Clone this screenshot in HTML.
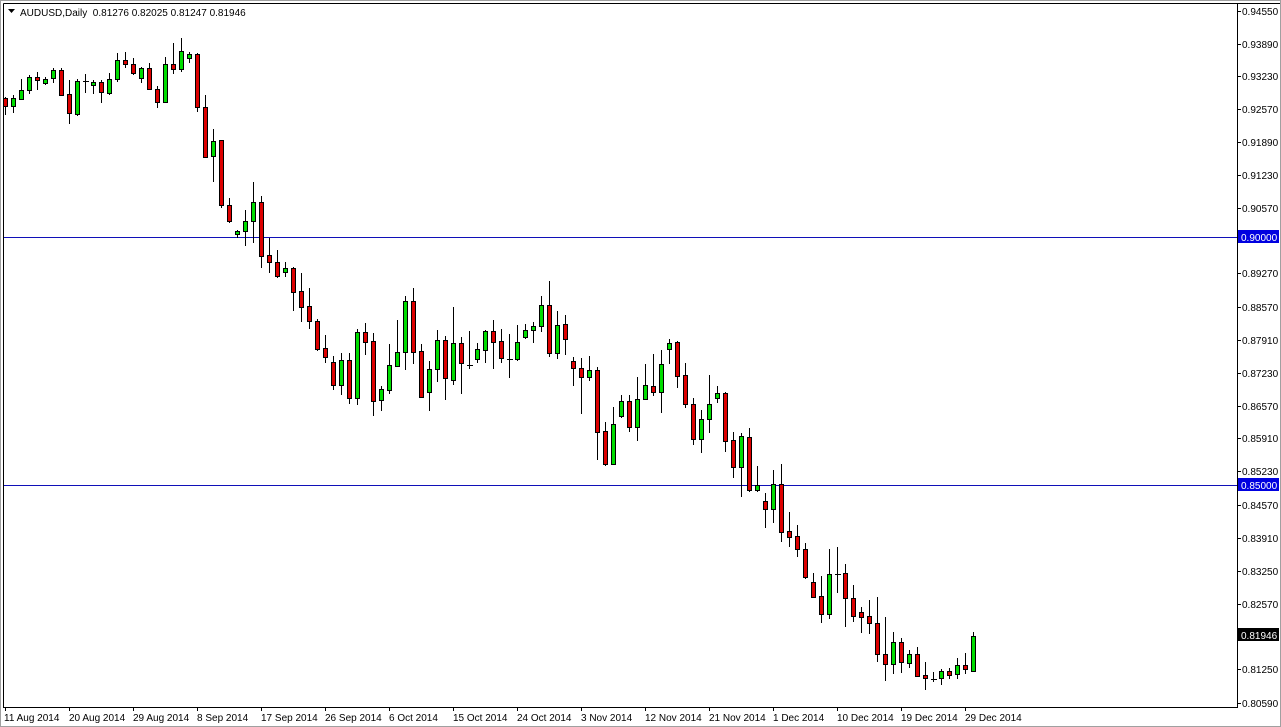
<!DOCTYPE html>
<html><head><meta charset="utf-8"><style>
html,body{margin:0;padding:0;background:#fff;width:1281px;height:727px;overflow:hidden}
svg{display:block}
text{font-family:"Liberation Sans",sans-serif;font-size:10px;fill:#000}
.g{fill:#00dd00;stroke:#000;stroke-width:1}
.r{fill:#dd0000;stroke:#000;stroke-width:1}
</style></head><body>
<svg width="1281" height="727" viewBox="0 0 1281 727" xmlns="http://www.w3.org/2000/svg">
<rect x="0" y="0" width="1281" height="727" fill="#fff"/>
<rect x="0.5" y="0.5" width="1280" height="726" fill="none" stroke="#a0a0a0"/>
<path d="M3.5 3.5H1280M3.5 3.5V707.5H1237.5V3.5" fill="none" stroke="#000"/>
<path d="M4 237.5H1237M4 485.5H1237" stroke="#1010b8" stroke-width="1"/>
<text x="20" y="16">AUDUSD,Daily&#160; 0.81276 0.82025 0.81247 0.81946</text>
<path d="M8 9h7l-3.5 4z" fill="#000"/>
<g id="wicks" stroke="#000" stroke-width="1" fill="none">
<path d="M5.5 97V115M13.5 95V113M21.5 79V100M29.5 75V94M37.5 72V90M45.5 77V85M53.5 68V83M61.5 68V96M69.5 80V124M77.5 79V116M85.5 74V93M93.5 80V94M101.5 80V103M109.5 73V95M117.5 53V82M125.5 52V68M133.5 58V75M141.5 67V83M149.5 63V90M157.5 86V108M165.5 57V103M173.5 43V74M181.5 38V72M189.5 52V63M197.5 53V112M205.5 95V157M213.5 129V182M221.5 140V208M229.5 198V223M237.5 230V238M245.5 210V246M253.5 182V243M261.5 196V268M269.5 238V273M277.5 250V278M285.5 262V277M293.5 267V311M301.5 273V322M309.5 288V329M317.5 319V351M325.5 335V363M333.5 356V390M341.5 353V395M349.5 353V404M357.5 329V405M365.5 323V355M373.5 333V416M381.5 386V411M389.5 344V394M397.5 320V366M405.5 296V370M413.5 288V364M421.5 344V397M429.5 361V411M437.5 330V382M445.5 336V400M453.5 307V385M461.5 337V394M469.5 331V369M477.5 343V363M485.5 330V363M493.5 320V369M501.5 329V363M509.5 334V378M517.5 325V361M525.5 324V339M533.5 322V343M541.5 296V332M549.5 281V357M557.5 311V359M565.5 315V355M573.5 357V386M581.5 358V414M589.5 356V381M597.5 367V460M605.5 422V466M613.5 407V465M621.5 395V418M629.5 395V432M637.5 377V441M645.5 364V400M653.5 354V396M661.5 350V413M669.5 339V364M677.5 341V388M685.5 363V408M693.5 398V445M701.5 410V453M709.5 375V433M717.5 386V403M725.5 392V452M733.5 432V478M741.5 433V497M749.5 428V492M757.5 466V492M765.5 493V528M773.5 470V523M781.5 464V542M789.5 512V547M797.5 525V557M805.5 543V579M813.5 573V597M821.5 576V623M829.5 549V619M837.5 547V593M845.5 564V627M853.5 585V622M861.5 607V633M869.5 600V634M877.5 597V662M885.5 617V681M893.5 632V674M901.5 638V673M909.5 650V668M917.5 647V677M925.5 662V690M933.5 672V682M941.5 669V685M949.5 668V679M957.5 658V679M965.5 653V674M973.5 632V672"/>
<path d="M83 81.5H89M467 365.5H473M507 359.5H513M835 574.5H841M931 679.5H937"/>
</g>
<g id="bodies">
<rect class="r" x="3.5" y="98.5" width="4" height="8"/>
<rect class="g" x="11.5" y="98.5" width="4" height="8"/>
<rect class="g" x="19.5" y="90.5" width="4" height="9"/>
<rect class="g" x="27.5" y="77.5" width="4" height="13"/>
<rect class="r" x="35.5" y="77.5" width="4" height="3"/>
<rect class="g" x="43.5" y="79.5" width="4" height="4"/>
<rect class="g" x="51.5" y="70.5" width="4" height="8"/>
<rect class="r" x="59.5" y="70.5" width="4" height="25"/>
<rect class="r" x="67.5" y="94.5" width="4" height="19"/>
<rect class="g" x="75.5" y="81.5" width="4" height="33"/>
<rect class="g" x="91.5" y="82.5" width="4" height="3"/>
<rect class="r" x="99.5" y="82.5" width="4" height="10"/>
<rect class="g" x="107.5" y="79.5" width="4" height="14"/>
<rect class="g" x="115.5" y="60.5" width="4" height="19"/>
<rect class="r" x="123.5" y="60.5" width="4" height="4"/>
<rect class="r" x="131.5" y="64.5" width="4" height="9"/>
<rect class="g" x="139.5" y="68.5" width="4" height="10"/>
<rect class="r" x="147.5" y="68.5" width="4" height="21"/>
<rect class="r" x="155.5" y="89.5" width="4" height="13"/>
<rect class="g" x="163.5" y="64.5" width="4" height="38"/>
<rect class="r" x="171.5" y="64.5" width="4" height="5"/>
<rect class="g" x="179.5" y="51.5" width="4" height="18"/>
<rect class="g" x="187.5" y="54.5" width="4" height="4"/>
<rect class="r" x="195.5" y="54.5" width="4" height="53"/>
<rect class="r" x="203.5" y="107.5" width="4" height="50"/>
<rect class="g" x="211.5" y="141.5" width="4" height="15"/>
<rect class="r" x="219.5" y="140.5" width="4" height="65"/>
<rect class="r" x="227.5" y="205.5" width="4" height="16"/>
<rect class="g" x="235.5" y="231.5" width="4" height="3"/>
<rect class="g" x="243.5" y="221.5" width="4" height="10"/>
<rect class="g" x="251.5" y="202.5" width="4" height="19"/>
<rect class="r" x="259.5" y="202.5" width="4" height="54"/>
<rect class="r" x="267.5" y="255.5" width="4" height="7"/>
<rect class="r" x="275.5" y="262.5" width="4" height="14"/>
<rect class="g" x="283.5" y="268.5" width="4" height="4"/>
<rect class="r" x="291.5" y="268.5" width="4" height="24"/>
<rect class="r" x="299.5" y="291.5" width="4" height="16"/>
<rect class="r" x="307.5" y="306.5" width="4" height="15"/>
<rect class="r" x="315.5" y="321.5" width="4" height="28"/>
<rect class="r" x="323.5" y="348.5" width="4" height="9"/>
<rect class="r" x="331.5" y="362.5" width="4" height="23"/>
<rect class="g" x="339.5" y="360.5" width="4" height="25"/>
<rect class="r" x="347.5" y="360.5" width="4" height="38"/>
<rect class="g" x="355.5" y="332.5" width="4" height="66"/>
<rect class="r" x="363.5" y="332.5" width="4" height="10"/>
<rect class="r" x="371.5" y="341.5" width="4" height="60"/>
<rect class="g" x="379.5" y="389.5" width="4" height="11"/>
<rect class="g" x="387.5" y="365.5" width="4" height="25"/>
<rect class="g" x="395.5" y="352.5" width="4" height="14"/>
<rect class="g" x="403.5" y="301.5" width="4" height="51"/>
<rect class="r" x="411.5" y="301.5" width="4" height="51"/>
<rect class="r" x="419.5" y="351.5" width="4" height="46"/>
<rect class="g" x="427.5" y="369.5" width="4" height="23"/>
<rect class="g" x="435.5" y="340.5" width="4" height="29"/>
<rect class="r" x="443.5" y="340.5" width="4" height="38"/>
<rect class="g" x="451.5" y="343.5" width="4" height="37"/>
<rect class="r" x="459.5" y="343.5" width="4" height="20"/>
<rect class="g" x="475.5" y="349.5" width="4" height="10"/>
<rect class="g" x="483.5" y="331.5" width="4" height="19"/>
<rect class="r" x="491.5" y="331.5" width="4" height="11"/>
<rect class="r" x="499.5" y="341.5" width="4" height="17"/>
<rect class="g" x="515.5" y="342.5" width="4" height="17"/>
<rect class="g" x="523.5" y="330.5" width="4" height="7"/>
<rect class="g" x="531.5" y="326.5" width="4" height="4"/>
<rect class="g" x="539.5" y="305.5" width="4" height="21"/>
<rect class="r" x="547.5" y="305.5" width="4" height="48"/>
<rect class="g" x="555.5" y="325.5" width="4" height="28"/>
<rect class="r" x="563.5" y="324.5" width="4" height="15"/>
<rect class="r" x="571.5" y="361.5" width="4" height="7"/>
<rect class="r" x="579.5" y="368.5" width="4" height="9"/>
<rect class="g" x="587.5" y="370.5" width="4" height="7"/>
<rect class="r" x="595.5" y="370.5" width="4" height="62"/>
<rect class="r" x="603.5" y="431.5" width="4" height="33"/>
<rect class="g" x="611.5" y="424.5" width="4" height="40"/>
<rect class="g" x="619.5" y="401.5" width="4" height="15"/>
<rect class="r" x="627.5" y="401.5" width="4" height="26"/>
<rect class="g" x="635.5" y="399.5" width="4" height="28"/>
<rect class="g" x="643.5" y="385.5" width="4" height="14"/>
<rect class="r" x="651.5" y="386.5" width="4" height="6"/>
<rect class="g" x="659.5" y="364.5" width="4" height="28"/>
<rect class="g" x="667.5" y="343.5" width="4" height="6"/>
<rect class="r" x="675.5" y="342.5" width="4" height="34"/>
<rect class="r" x="683.5" y="375.5" width="4" height="29"/>
<rect class="r" x="691.5" y="404.5" width="4" height="35"/>
<rect class="g" x="699.5" y="419.5" width="4" height="20"/>
<rect class="g" x="707.5" y="404.5" width="4" height="15"/>
<rect class="g" x="715.5" y="393.5" width="4" height="5"/>
<rect class="r" x="723.5" y="393.5" width="4" height="48"/>
<rect class="r" x="731.5" y="440.5" width="4" height="27"/>
<rect class="g" x="739.5" y="436.5" width="4" height="31"/>
<rect class="r" x="747.5" y="437.5" width="4" height="53"/>
<rect class="g" x="755.5" y="485.5" width="4" height="5"/>
<rect class="r" x="763.5" y="501.5" width="4" height="8"/>
<rect class="g" x="771.5" y="484.5" width="4" height="25"/>
<rect class="r" x="779.5" y="484.5" width="4" height="48"/>
<rect class="r" x="787.5" y="531.5" width="4" height="6"/>
<rect class="r" x="795.5" y="536.5" width="4" height="13"/>
<rect class="r" x="803.5" y="549.5" width="4" height="28"/>
<rect class="r" x="811.5" y="582.5" width="4" height="15"/>
<rect class="r" x="819.5" y="596.5" width="4" height="18"/>
<rect class="g" x="827.5" y="574.5" width="4" height="40"/>
<rect class="r" x="843.5" y="573.5" width="4" height="25"/>
<rect class="r" x="851.5" y="598.5" width="4" height="18"/>
<rect class="r" x="859.5" y="612.5" width="4" height="5"/>
<rect class="r" x="867.5" y="616.5" width="4" height="7"/>
<rect class="r" x="875.5" y="623.5" width="4" height="31"/>
<rect class="r" x="883.5" y="654.5" width="4" height="10"/>
<rect class="g" x="891.5" y="642.5" width="4" height="22"/>
<rect class="r" x="899.5" y="642.5" width="4" height="20"/>
<rect class="g" x="907.5" y="654.5" width="4" height="9"/>
<rect class="r" x="915.5" y="654.5" width="4" height="22"/>
<rect class="r" x="923.5" y="675.5" width="4" height="3"/>
<rect class="g" x="939.5" y="671.5" width="4" height="7"/>
<rect class="r" x="947.5" y="671.5" width="4" height="4"/>
<rect class="g" x="955.5" y="665.5" width="4" height="9"/>
<rect class="r" x="963.5" y="665.5" width="4" height="4"/>
<rect class="g" x="971.5" y="636.5" width="4" height="35"/>
</g>
<g stroke="#000">
<path d="M1237 11.5h4M1237 44.5h4M1237 76.5h4M1237 109.5h4M1237 142.5h4M1237 175.5h4M1237 208.5h4M1237 273.5h4M1237 307.5h4M1237 340.5h4M1237 373.5h4M1237 406.5h4M1237 438.5h4M1237 471.5h4M1237 505.5h4M1237 538.5h4M1237 571.5h4M1237 604.5h4M1237 669.5h4M1237 703.5h4"/>
<path d="M5.5 707v4M69.5 707v4M133.5 707v4M197.5 707v4M261.5 707v4M325.5 707v4M389.5 707v4M453.5 707v4M517.5 707v4M581.5 707v4M645.5 707v4M709.5 707v4M773.5 707v4M837.5 707v4M901.5 707v4M965.5 707v4"/>
</g>
<g>
<text x="1242" y="15">0.94550</text>
<text x="1242" y="48">0.93890</text>
<text x="1242" y="80">0.93230</text>
<text x="1242" y="113">0.92570</text>
<text x="1242" y="146">0.91890</text>
<text x="1242" y="179">0.91230</text>
<text x="1242" y="212">0.90570</text>
<text x="1242" y="277">0.89270</text>
<text x="1242" y="311">0.88570</text>
<text x="1242" y="344">0.87910</text>
<text x="1242" y="377">0.87230</text>
<text x="1242" y="410">0.86570</text>
<text x="1242" y="442">0.85910</text>
<text x="1242" y="475">0.85230</text>
<text x="1242" y="509">0.84570</text>
<text x="1242" y="542">0.83910</text>
<text x="1242" y="575">0.83250</text>
<text x="1242" y="608">0.82570</text>
<text x="1242" y="673">0.81250</text>
<text x="1242" y="707">0.80590</text>
<rect x="1238" y="230" width="41" height="13" fill="#0000e0"/>
<text x="1241" y="241" style="fill:#fff">0.90000</text>
<rect x="1238" y="478" width="41" height="13" fill="#0000e0"/>
<text x="1241" y="489" style="fill:#fff">0.85000</text>
<rect x="1238" y="628" width="41" height="13" fill="#000"/>
<text x="1241" y="639" style="fill:#fff">0.81946</text>
</g>
<g>
<text x="4" y="721">11 Aug 2014</text>
<text x="69" y="721">20 Aug 2014</text>
<text x="133" y="721">29 Aug 2014</text>
<text x="197" y="721">8 Sep 2014</text>
<text x="261" y="721">17 Sep 2014</text>
<text x="325" y="721">26 Sep 2014</text>
<text x="389" y="721">6 Oct 2014</text>
<text x="453" y="721">15 Oct 2014</text>
<text x="517" y="721">24 Oct 2014</text>
<text x="581" y="721">3 Nov 2014</text>
<text x="645" y="721">12 Nov 2014</text>
<text x="709" y="721">21 Nov 2014</text>
<text x="773" y="721">1 Dec 2014</text>
<text x="837" y="721">10 Dec 2014</text>
<text x="901" y="721">19 Dec 2014</text>
<text x="965" y="721">29 Dec 2014</text>
</g>
</svg>
</body></html>
